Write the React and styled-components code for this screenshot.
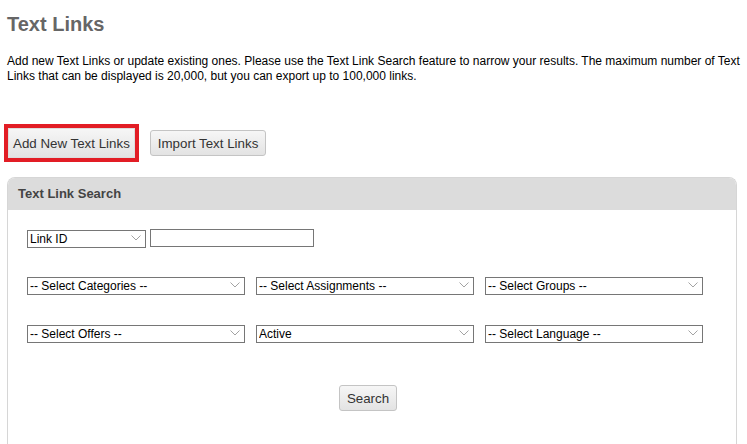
import styled, { createGlobalStyle } from 'styled-components';

const GlobalStyle = createGlobalStyle`
  html, body {
    margin: 0;
    padding: 0;
    background: #fff;
  }
  body {
    font-family: "Liberation Sans", Arial, sans-serif;
    color: #000;
  }
`;

const Page = styled.div`
  padding: 12px 0 0 7px;
  width: 740px;
  box-sizing: border-box;
`;

const Title = styled.h1`
  margin: 0;
  font-size: 20px;
  line-height: 24px;
  font-weight: bold;
  color: #666;
`;

const Intro = styled.p`
  margin: 18px 0 0;
  font-size: 12px;
  line-height: 15px;
`;

const ButtonRow = styled.div`
  display: flex;
  align-items: center;
  gap: 11px;
  margin: 40px 0 0 -3px;
`;

const Highlight = styled.div`
  display: flex;
  border: 4px solid #e21d25;
`;

const Button = styled.button`
  font-family: inherit;
  font-size: 13.33px;
  color: #333;
  height: ${(props) => (props.tall ? '30px' : '26px')};
  padding: 0 ${(props) => props.pad || 7}px;
  background: linear-gradient(#f6f6f6, #e3e3e3);
  border: 1px solid ${(props) => (props.tall ? '#ddd' : '#c4c4c4')};
  border-radius: ${(props) => (props.tall ? '0' : '3px')};
  cursor: pointer;
`;

const Panel = styled.section`
  margin-top: 15px;
  width: 728px;
  border: 1px solid #d6d6d6;
  border-bottom: none;
  border-radius: 8px 8px 0 0;
  overflow: hidden;
`;

const PanelHeader = styled.h2`
  margin: 0;
  height: 32px;
  line-height: 32px;
  padding-left: 10px;
  background: #dcdcdc;
  font-size: 13px;
  font-weight: bold;
  color: #444;
`;

const PanelBody = styled.div`
  padding: 19px 27px 40px 19px;
  display: flex;
  flex-direction: column;
`;

const FieldRow = styled.div`
  display: flex;
  gap: ${(props) => props.gap || 11}px;
  margin-top: ${(props) => props.top || 0}px;
`;

const SelectWrap = styled.div`
  position: relative;
  width: ${(props) => props.width}px;
  height: 18px;
`;

const Select = styled.select`
  appearance: none;
  -webkit-appearance: none;
  box-sizing: border-box;
  width: 100%;
  height: 100%;
  margin: 0;
  padding: 0 16px 0 2px;
  border: 1px solid #767676;
  border-radius: 0;
  background: #fff;
  font-family: inherit;
  font-size: 12px;
  color: #000;
`;

const Chevron = styled.svg`
  position: absolute;
  right: 5px;
  top: 6px;
  pointer-events: none;
`;

const TextInput = styled.input`
  box-sizing: border-box;
  width: 164px;
  height: 18px;
  margin: 0;
  border: 1px solid #767676;
  font-family: inherit;
  font-size: 12px;
`;

const Actions = styled.div`
  display: flex;
  justify-content: center;
  margin-top: 43px;
`;

function Dropdown({ width, value }) {
  return (
    <SelectWrap width={width}>
      <Select defaultValue={value}>
        <option>{value}</option>
      </Select>
      <Chevron width="10" height="6" viewBox="0 0 10 6">
        <polyline points="0.5,0.5 5,5 9.5,0.5" fill="none" stroke="#999" strokeWidth="0.9" />
      </Chevron>
    </SelectWrap>
  );
}

export default function App() {
  return (
    <>
      <GlobalStyle />
      <Page>
        <Title>Text Links</Title>
        <Intro>
          Add new Text Links or update existing ones. Please use the Text Link Search feature to narrow
          your results. The maximum number of Text Links that can be displayed is 20,000, but you can
          export up to 100,000 links.
        </Intro>

        <ButtonRow>
          <Highlight>
            <Button tall pad={4}>Add New Text Links</Button>
          </Highlight>
          <Button pad={7}>Import Text Links</Button>
        </ButtonRow>

        <Panel>
          <PanelHeader>Text Link Search</PanelHeader>
          <PanelBody>
            <FieldRow gap={4}>
              <Dropdown width={119} value="Link ID" />
              <TextInput type="text" />
            </FieldRow>
            <FieldRow top={29}>
              <Dropdown width={218} value="-- Select Categories --" />
              <Dropdown width={218} value="-- Select Assignments --" />
              <Dropdown width={218} value="-- Select Groups --" />
            </FieldRow>
            <FieldRow top={30}>
              <Dropdown width={218} value="-- Select Offers --" />
              <Dropdown width={218} value="Active" />
              <Dropdown width={218} value="-- Select Language --" />
            </FieldRow>
            <Actions>
              <Button pad={7}>Search</Button>
            </Actions>
          </PanelBody>
        </Panel>
      </Page>
    </>
  );
}
